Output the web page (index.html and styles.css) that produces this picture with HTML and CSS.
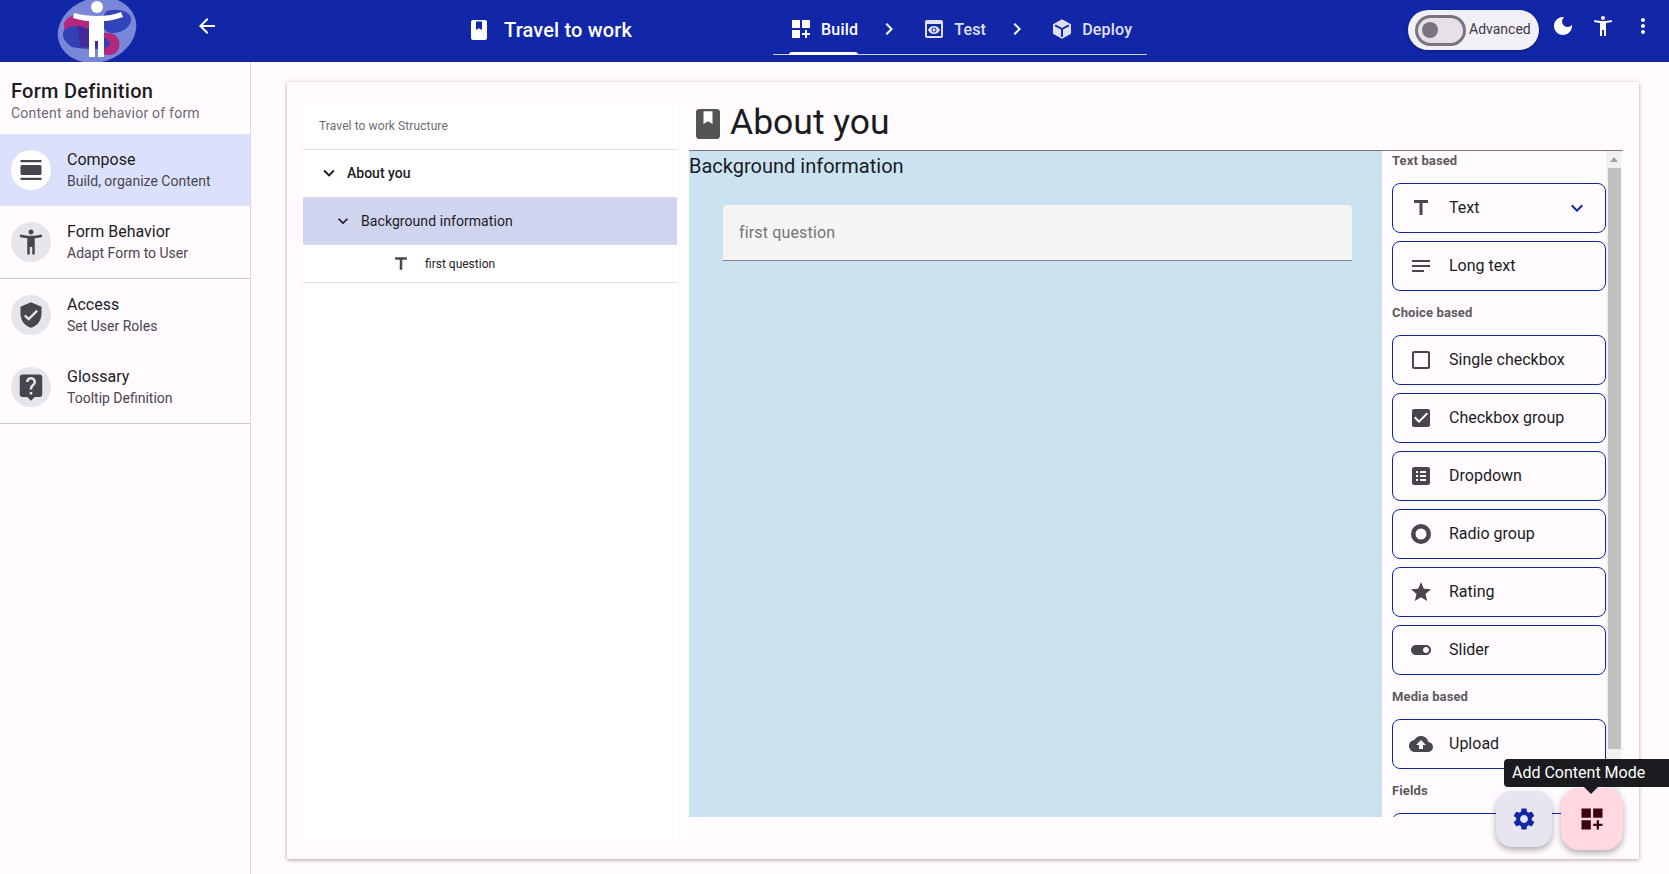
FILE: index.html
```html
<!DOCTYPE html>
<html lang="en">
<head>
<meta charset="utf-8">
<title>Travel to work</title>
<link rel="stylesheet" href="styles.css">
</head>
<body>
<svg class="sprite" aria-hidden="true">
  <symbol id="i-back" viewBox="0 0 24 24"><path d="M20 11H7.83l5.59-5.59L12 4l-8 8 8 8 1.41-1.41L7.83 13H20v-2z"/></symbol>
  <symbol id="i-book" viewBox="0 0 24 24"><path fill-rule="evenodd" d="M18 2H6c-1.1 0-2 .9-2 2v16c0 1.1.9 2 2 2h12c1.1 0 2-.9 2-2V4c0-1.1-.9-2-2-2zM9 3.5h6V12l-3-1.8L9 12V3.5z"/></symbol>
  <symbol id="i-build" viewBox="0 0 24 24"><path d="M3 3h8v8H3zm10 0h8v8h-8zM3 13h8v8H3zm15 0h-2v3h-3v2h3v3h2v-3h3v-2h-3z"/></symbol>
  <symbol id="i-right" viewBox="0 0 24 24"><path d="M10 6L8.59 7.41 13.17 12l-4.58 4.59L10 18l6-6z"/></symbol>
  <symbol id="i-preview" viewBox="0 0 24 24"><path d="M19 3H5c-1.11 0-2 .9-2 2v14c0 1.1.89 2 2 2h14c1.1 0 2-.9 2-2V5c0-1.1-.89-2-2-2zm0 16H5V7h14v12zm-5.5-6c0 .83-.67 1.5-1.5 1.5s-1.5-.67-1.5-1.5.67-1.5 1.5-1.5 1.5.67 1.5 1.5zM12 9c-2.73 0-5.06 1.66-6 4 .94 2.34 3.27 4 6 4s5.06-1.66 6-4c-.94-2.34-3.27-4-6-4zm0 6.5c-1.38 0-2.5-1.12-2.5-2.5s1.12-2.5 2.5-2.5 2.5 1.12 2.5 2.5-1.12 2.5-2.5 2.5z"/></symbol>
  <symbol id="i-cube" viewBox="0 0 24 24"><path fill-rule="evenodd" d="M12 2.2l9 5v9.6l-9 5-9-5V7.2l9-5zM12 11L5.6 7.6l-.9 1.6 6.3 3.4V19.800h2v-7.200l6.300-3.400-.9-1.600L12 11z"/></symbol>
  <symbol id="i-moon" viewBox="0 0 24 24"><path d="M12 3c-4.970 0-9 4.030-9 9s4.030 9 9 9 9-4.030 9-9c0-.46-.04-.92-.1-1.360-.98 1.370-2.580 2.260-4.400 2.260-2.980 0-5.400-2.420-5.400-5.400 0-1.810.89-3.420 2.260-4.400-.44-.06-.9-.1-1.360-.1z"/></symbol>
  <symbol id="i-person" viewBox="0 0 24 24"><path d="M20.500 6c-2.610.7-5.670 1-8.500 1s-5.890-.3-8.500-1L3 8c1.860.5 4 .83 6 1v13h2v-6h2v6h2V9c2-.17 4.140-.5 6-1l-.5-2zM12 6c1.100 0 2-.9 2-2s-.9-2-2-2-2 .9-2 2 .9 2 2 2z"/></symbol>
  <symbol id="i-more" viewBox="0 0 24 24"><path d="M12 8c1.100 0 2-.9 2-2s-.9-2-2-2-2 .9-2 2 .9 2 2 2zm0 2c-1.100 0-2 .9-2 2s.9 2 2 2 2-.9 2-2-.9-2-2-2zm0 6c-1.100 0-2 .9-2 2s.9 2 2 2 2-.9 2-2-.9-2-2-2z"/></symbol>
  <symbol id="i-day" viewBox="0 0 24 24"><path d="M1.500 2h21v2.300h-21zM1.500 19.700h21V22h-21zM3 7h18a1.500 1.500 0 011.500 1.500v7A1.500 1.500 0 0121 17H3a1.500 1.500 0 01-1.500-1.500v-7A1.500 1.500 0 013 7z"/></symbol>
  <symbol id="i-shield" viewBox="0 0 24 24"><path d="M12 1L3 5v6c0 5.550 3.840 10.740 9 12 5.160-1.260 9-6.450 9-12V5l-9-4zm-2 16l-4-4 1.410-1.410L10 14.170l6.590-6.590L18 9l-8 8z"/></symbol>
  <symbol id="i-help" viewBox="0 0 24 24"><path d="M19 2H5c-1.110 0-2 .9-2 2v14c0 1.100.89 2 2 2h4l3 3 3-3h4c1.100 0 2-.9 2-2V4c0-1.100-.9-2-2-2zm-6 16h-2v-2h2v2zm2.070-7.750l-.9.92C13.450 11.900 13 12.500 13 14h-2v-.5c0-1.100.45-2.100 1.170-2.830l1.240-1.260c.37-.36.59-.86.59-1.410 0-1.100-.9-2-2-2s-2 .9-2 2H8c0-2.210 1.790-4 4-4s4 1.790 4 4c0 .88-.36 1.680-.93 2.250z"/></symbol>
  <symbol id="i-down" viewBox="0 0 24 24"><path d="M16.590 8.590L12 13.170 7.410 8.590 6 10l6 6 6-6z"/></symbol>
  <symbol id="i-title" viewBox="0 0 24 24"><path d="M5 4v3h5.500v12h3V7H19V4z"/></symbol>
  <symbol id="i-notes" viewBox="0 0 24 24"><path d="M3 18h12v-2H3v2zM3 6v2h18V6H3zm0 7h18v-2H3v2z"/></symbol>
  <symbol id="i-blank" viewBox="0 0 24 24"><path d="M19 5v14H5V5h14m0-2H5c-1.100 0-2 .9-2 2v14c0 1.100.9 2 2 2h14c1.100 0 2-.9 2-2V5c0-1.100-.9-2-2-2z"/></symbol>
  <symbol id="i-check" viewBox="0 0 24 24"><path d="M19 3H5c-1.110 0-2 .9-2 2v14c0 1.100.89 2 2 2h14c1.110 0 2-.9 2-2V5c0-1.100-.89-2-2-2zm-9 14l-5-5 1.410-1.410L10 14.170l7.590-7.590L19 8l-9 9z"/></symbol>
  <symbol id="i-list" viewBox="0 0 24 24"><path d="M19 3H5c-1.100 0-2 .9-2 2v14c0 1.100.9 2 2 2h14c1.100 0 2-.9 2-2V5c0-1.100-.9-2-2-2zM9 17H7v-2h2v2zm0-4H7v-2h2v2zm0-4H7V7h2v2zm8 8h-6v-2h6v2zm0-4h-6v-2h6v2zm0-4h-6V7h6v2z"/></symbol>
  <symbol id="i-radio" viewBox="0 0 24 24"><path fill-rule="evenodd" d="M12 2a10 10 0 100 20 10 10 0 000-20zm0 4.500a5.500 5.500 0 110 11 5.500 5.500 0 010-11z"/></symbol>
  <symbol id="i-star" viewBox="0 0 24 24"><path d="M12 17.270L18.180 21l-1.640-7.030L22 9.240l-7.190-.61L12 2 9.190 8.630 2 9.240l5.460 4.730L5.820 21z"/></symbol>
  <symbol id="i-toggle" viewBox="0 0 24 24"><path d="M17 7H7c-2.760 0-5 2.240-5 5s2.240 5 5 5h10c2.760 0 5-2.240 5-5s-2.240-5-5-5zm0 8c-1.660 0-3-1.340-3-3s1.340-3 3-3 3 1.340 3 3-1.340 3-3 3z"/></symbol>
  <symbol id="i-upload" viewBox="0 0 24 24"><path d="M19.350 10.040C18.670 6.590 15.640 4 12 4 9.110 4 6.600 5.640 5.350 8.040 2.340 8.360 0 10.910 0 14c0 3.310 2.690 6 6 6h13c2.760 0 5-2.240 5-5 0-2.640-2.050-4.780-4.650-4.960zM14 13v4h-4v-4H7l5-5 5 5h-3z"/></symbol>
  <symbol id="i-gear" viewBox="0 0 24 24"><path d="M19.140 12.940c.04-.3.06-.61.06-.94 0-.32-.02-.64-.07-.94l2.030-1.580c.18-.14.23-.41.12-.61l-1.920-3.320c-.12-.22-.37-.29-.59-.22l-2.390.96c-.5-.38-1.030-.7-1.620-.94l-.36-2.540c-.04-.24-.24-.41-.48-.41h-3.840c-.24 0-.43.17-.47.41l-.36 2.540c-.59.24-1.130.57-1.620.94l-2.390-.96c-.22-.08-.47 0-.59.22L2.740 8.870c-.12.21-.08.47.12.61l2.030 1.580c-.05.3-.09.63-.09.94s.02.64.07.94l-2.030 1.580c-.18.14-.23.41-.12.61l1.920 3.320c.12.22.37.29.59.22l2.390-.96c.5.38 1.030.7 1.620.94l.36 2.540c.05.24.24.41.48.41h3.840c.24 0 .44-.17.47-.41l.36-2.540c.59-.24 1.130-.56 1.620-.94l2.390.96c.22.08.47 0 .59-.22l1.920-3.320c.12-.22.07-.47-.12-.61l-2.010-1.580zM12 15.600c-1.980 0-3.600-1.620-3.600-3.600s1.620-3.600 3.600-3.600 3.600 1.620 3.600 3.600-1.620 3.600-3.600 3.600z"/></symbol>
</svg>

<header class="topbar">
  <svg class="logo" viewBox="0 0 80 62" aria-hidden="true">
    <ellipse cx="40" cy="30" rx="40" ry="32" transform="rotate(-18 40 30)" fill="#7a86d8"/>
    <path d="M50 11c9-3 22-1 24 7 1 8-8 15-19 15-6 0-9-4-9-11 0-6 1-9 4-11z" fill="#3145bb"/>
    <path d="M7 24c1-6 9-10 17-9l14 5-2 15C24 35 12 36 8 31c-1-2-1-4-1-7z" fill="#b3277d"/>
    <path d="M41 34c9-3 19-1 21 7 2 8-3 14-10 14-7 0-13-5-13-12z" fill="#b3277d"/>
    <path d="M6 33c1-6 11-8 20-6 9 2 19 8 26 14 2 3-1 8-8 8-10 0-20 0-29-2-5-3-10-9-9-14z" fill="#3340b6"/>
    <path d="M20 26c8 0 17 6 28 13l-4 8H24z" fill="#43299c"/>
    <path d="M17 13c7 2 15 3 23 3s16-1 24-4l2 5c-6 2-13 4-19 4v36h-6V41h-3v16h-6V21c-5 0-11-2-16-3z" fill="#fff"/>
    <circle cx="40" cy="7" r="6" fill="#fff"/>
  </svg>
  <svg class="icon back"><use href="#i-back"/></svg>
  <div class="doc-title">
    <svg class="icon book"><use href="#i-book"/></svg>
    <span class="doc-name">Travel to work</span>
  </div>
  <nav class="tabs">
    <div class="tab active">
      <svg class="icon"><use href="#i-build"/></svg>
      <span>Build</span>
      <i class="tab-bar"></i>
    </div>
    <svg class="icon sep"><use href="#i-right"/></svg>
    <div class="tab">
      <svg class="icon"><use href="#i-preview"/></svg>
      <span>Test</span>
    </div>
    <svg class="icon sep"><use href="#i-right"/></svg>
    <div class="tab">
      <svg class="icon"><use href="#i-cube"/></svg>
      <span>Deploy</span>
    </div>
  </nav>
  <div class="top-actions">
    <div class="advanced">
      <span class="switch"><i class="switch-thumb"></i></span>
      <span class="advanced-label">Advanced</span>
    </div>
    <svg class="icon top-icon"><use href="#i-moon"/></svg>
    <svg class="icon top-icon"><use href="#i-person"/></svg>
    <svg class="icon top-icon"><use href="#i-more"/></svg>
  </div>
</header>

<div class="page">
  <aside class="sidebar">
    <div class="side-head">
      <div class="side-title">Form Definition</div>
      <div class="side-sub">Content and behavior of form</div>
    </div>
    <div class="side-item selected">
      <span class="side-icon"><svg class="icon"><use href="#i-day"/></svg></span>
      <div><div class="item-title">Compose</div><div class="item-sub">Build, organize Content</div></div>
    </div>
    <div class="side-item ruled">
      <span class="side-icon"><svg class="icon big"><use href="#i-person"/></svg></span>
      <div><div class="item-title">Form Behavior</div><div class="item-sub">Adapt Form to User</div></div>
    </div>
    <div class="side-item">
      <span class="side-icon"><svg class="icon mid"><use href="#i-shield"/></svg></span>
      <div><div class="item-title">Access</div><div class="item-sub">Set User Roles</div></div>
    </div>
    <div class="side-item ruled">
      <span class="side-icon"><svg class="icon big"><use href="#i-help"/></svg></span>
      <div><div class="item-title">Glossary</div><div class="item-sub">Tooltip Definition</div></div>
    </div>
  </aside>

  <main class="content">
    <section class="card">
      <div class="tree">
        <div class="tree-head">Travel to work Structure</div>
        <div class="tree-row lvl-1">
          <svg class="icon tree-chev"><use href="#i-down"/></svg>
          <span>About you</span>
        </div>
        <div class="tree-row lvl-2">
          <svg class="icon tree-chev small"><use href="#i-down"/></svg>
          <span>Background information</span>
        </div>
        <div class="tree-row lvl-3">
          <svg class="icon tree-t"><use href="#i-title"/></svg>
          <span>first question</span>
        </div>
      </div>

      <div class="editor">
        <div class="page-title">
          <svg class="icon title-book"><use href="#i-book"/></svg>
          <h1>About you</h1>
        </div>
        <div class="workspace">
          <div class="canvas">
            <h2>Background information</h2>
            <div class="field">first question</div>
          </div>
          <div class="palette">
            <div class="pal-label">Text based</div>
            <div class="pal-group">
              <div class="pal-btn"><svg class="icon"><use href="#i-title"/></svg><span>Text</span><svg class="icon pal-chev"><use href="#i-down"/></svg></div>
              <div class="pal-btn"><svg class="icon"><use href="#i-notes"/></svg><span>Long text</span></div>
            </div>
            <div class="pal-label">Choice based</div>
            <div class="pal-group">
              <div class="pal-btn"><svg class="icon"><use href="#i-blank"/></svg><span>Single checkbox</span></div>
              <div class="pal-btn"><svg class="icon"><use href="#i-check"/></svg><span>Checkbox group</span></div>
              <div class="pal-btn"><svg class="icon"><use href="#i-list"/></svg><span>Dropdown</span></div>
              <div class="pal-btn"><svg class="icon"><use href="#i-radio"/></svg><span>Radio group</span></div>
              <div class="pal-btn"><svg class="icon"><use href="#i-star"/></svg><span>Rating</span></div>
              <div class="pal-btn"><svg class="icon"><use href="#i-toggle"/></svg><span>Slider</span></div>
            </div>
            <div class="pal-label">Media based</div>
            <div class="pal-group">
              <div class="pal-btn"><svg class="icon"><use href="#i-upload"/></svg><span>Upload</span></div>
            </div>
            <div class="pal-label">Fields</div>
            <div class="pal-group">
              <div class="pal-btn"></div>
            </div>
          </div>
          <div class="scrollbar">
            <span class="scroll-arrow"></span>
            <span class="scroll-thumb"></span>
          </div>
        </div>
      </div>

      <div class="fabs">
        <button class="fab fab-gear" type="button"><svg class="icon"><use href="#i-gear"/></svg></button>
        <button class="fab fab-add" type="button"><svg class="icon"><use href="#i-build"/></svg></button>
        <div class="tooltip">Add Content Mode</div>
      </div>
    </section>
  </main>
</div>
</body>
</html>
```

FILE: styles.css
```css
* { box-sizing: border-box; }

html, body {
  margin: 0;
  height: 874px;
  overflow: hidden;
  background: #fffbff;
  color: #1c1b1f;
  font-family: Roboto, "Liberation Sans", sans-serif;
}

.sprite { display: none; }

.icon {
  display: block;
  flex: none;
  width: 24px;
  height: 24px;
  fill: currentColor;
}

/* Top bar */
.topbar {
  display: flex;
  align-items: flex-start;
  height: 62px;
  background: #1226a8;
  color: #fff;
  overflow: hidden;
}

.logo {
  flex: none;
  width: 80px;
  height: 62px;
  margin-left: 57px;
  overflow: visible;
}

.back { margin: 14px 0 0 58px; }

.doc-title {
  display: flex;
  align-items: center;
  gap: 13px;
  flex: none;
  width: 306px;
  height: 60px;
  margin-left: 248px;
}

.doc-name {
  font-size: 20px;
  font-weight: 500;
  letter-spacing: .15px;
}

.tabs {
  display: flex;
  align-items: center;
  flex: none;
  gap: 20px;
  width: 374px;
  height: 55px;
  padding: 4px 0 0 16px;
  border-bottom: 1px solid #cfcfd6;
  color: #e1e0f3;
  font-size: 16px;
  font-weight: 500;
  letter-spacing: .2px;
}

.tab {
  position: relative;
  display: flex;
  align-items: center;
  gap: 8px;
  height: 50px;
}

.tab.active { color: #fff; }

.tab-bar {
  position: absolute;
  left: 0;
  right: 0;
  bottom: -1px;
  height: 3px;
  border-radius: 3px 3px 0 0;
  background: #fff;
}

.sep { color: #fff; margin: 0 1px 0 -1px; }

.top-actions {
  display: flex;
  align-items: flex-start;
  gap: 16px;
  margin-left: auto;
  padding: 10px 14px 0 0;
}

.advanced {
  display: flex;
  align-items: center;
  gap: 3px;
  width: 131px;
  height: 40px;
  margin-right: -4px;
  padding-left: 7px;
  border-radius: 20px;
  background: #f3eff6;
  color: #3d3a44;
  font-size: 14px;
  box-shadow: 0 1px 3px rgba(0, 0, 0, .35);
}

.advanced-label { padding-bottom: 2px; }

.switch {
  display: flex;
  align-items: center;
  flex: none;
  width: 51px;
  height: 31px;
  padding-left: 4px;
  border: 3px solid #79747e;
  border-radius: 16px;
  background: #e6e0e9;
}

.switch-thumb {
  width: 16px;
  height: 16px;
  border-radius: 50%;
  background: #79747e;
}

.top-icon { margin-top: 4px; }

/* Shell */
.page {
  display: flex;
  height: 812px;
}

.sidebar {
  flex: none;
  width: 251px;
  border-right: 1px solid #d9d7dc;
}

.side-head {
  height: 72px;
  padding: 18px 11px 0;
}

.side-title {
  font-size: 20px;
  font-weight: 500;
  line-height: 23px;
  letter-spacing: .28px;
}

.side-sub {
  color: #6d6a72;
  font-size: 14px;
  line-height: 20px;
  letter-spacing: .23px;
}

.side-item {
  display: flex;
  align-items: center;
  gap: 16px;
  height: 72px;
  padding: 0 11px;
}

.side-item.selected { background: #dce1fb; }

.side-item.ruled {
  height: 73px;
  padding-bottom: 1px;
  border-bottom: 1px solid #c4c9c9;
}

.side-icon {
  display: flex;
  align-items: center;
  justify-content: center;
  flex: none;
  width: 40px;
  height: 40px;
  border-radius: 50%;
  background: #e7e4ea;
  color: #49454f;
}

.selected .side-icon { background: #fff; }
.side-icon .big { width: 30px; height: 30px; }
.side-icon .mid { width: 28px; height: 28px; }

.item-title {
  color: #1c1b1f;
  font-size: 16px;
  line-height: 22px;
}

.item-sub {
  color: #49454f;
  font-size: 14px;
  line-height: 20px;
}

.content {
  flex: 1;
  padding: 20px 30px 0 36px;
}

.card {
  position: relative;
  display: flex;
  gap: 12px;
  width: 1352px;
  height: 777px;
  padding: 20px 16px 0;
  background: #fffbff;
  box-shadow: 0 1px 4px rgba(0, 0, 0, .35);
}

/* Structure tree */
.tree {
  flex: none;
  width: 374px;
  height: 740px;
  background: #fff;
}

.tree-head {
  display: flex;
  align-items: center;
  height: 48px;
  padding-left: 16px;
  border-bottom: 1px solid #dedcdf;
  color: #6f6b73;
  font-size: 12px;
  letter-spacing: .1px;
}

.tree-row {
  display: flex;
  align-items: center;
  font-size: 14px;
}

.lvl-1 {
  gap: 7px;
  height: 47px;
  padding: 0 0 1px 15px;
  font-weight: 500;
}

.lvl-2 {
  gap: 7px;
  height: 48px;
  padding-left: 29px;
  border-top: 1px solid #dedcdf;
  border-bottom: 1px solid #dedcdf;
  background: #d0d4ee;
  letter-spacing: .07px;
}

.lvl-3 {
  gap: 14px;
  height: 38px;
  padding-left: 88px;
  border-bottom: 1px solid #dedcdf;
  color: #26242a;
  font-size: 12px;
}

.tree-chev { width: 22px; height: 22px; }
.tree-chev.small { width: 20px; height: 20px; margin-left: 1px; margin-right: 1px; }

.tree-t {
  width: 20px;
  height: 20px;
  margin-top: 1px;
  color: #49454f;
}

/* Editor */
.editor {
  display: flex;
  flex-direction: column;
  flex: none;
  width: 934px;
}

.page-title {
  display: flex;
  align-items: center;
  gap: 4px;
  height: 49px;
  padding: 0 0 9px 1px;
  border-bottom: 1px solid #79747e;
}

.title-book {
  width: 36px;
  height: 36px;
  margin-top: 4px;
  color: #545454;
}

.page-title h1 {
  margin: 0;
  font-size: 35.5px;
  font-weight: 400;
  line-height: 40px;
}

.workspace {
  display: flex;
  height: 666px;
}

.canvas {
  flex: none;
  width: 693px;
  padding-right: 30px;
  background: #cbe3f1;
}

.canvas h2 {
  margin: 0 0 24px;
  font-size: 20px;
  font-weight: 400;
  line-height: 30px;
}

.field {
  display: flex;
  align-items: center;
  height: 56px;
  margin-left: 34px;
  padding-left: 16px;
  border-radius: 4px 4px 0 0;
  border-bottom: 1px solid #8a868f;
  background: #f5f5f5;
  color: #757575;
  font-size: 16px;
  letter-spacing: .15px;
}

/* Palette */
.palette {
  flex: none;
  width: 224px;
  height: 666px;
  padding: 2px 0 0 10px;
  overflow: hidden;
}

.scrollbar {
  display: flex;
  flex-direction: column;
  flex: none;
  width: 15px;
  background: #f1f1f1;
}

.scroll-arrow {
  display: flex;
  justify-content: center;
  align-items: center;
  height: 17px;
}

.scroll-arrow::before {
  content: "";
  border: 4px solid transparent;
  border-top: 0;
  border-bottom: 5px solid #a3a3a3;
}

.scroll-thumb {
  height: 581px;
  margin-left: 2px;
  background: #c1c1c1;
}

.pal-label {
  margin-bottom: 14px;
  color: #5c5a60;
  font-size: 13px;
  font-weight: 700;
  line-height: 16px;
  letter-spacing: .13px;
}

.pal-group {
  display: flex;
  flex-direction: column;
  gap: 8px;
  margin-bottom: 14px;
}

.pal-group:last-child { margin-bottom: 0; }

.pal-btn {
  display: flex;
  align-items: center;
  gap: 16px;
  flex: none;
  width: 214px;
  height: 50px;
  padding: 0 16px;
  border: 1.5px solid #1226a8;
  border-radius: 8px;
  color: #1c1b1f;
  font-size: 16px;
}

.pal-btn span { padding-bottom: 2px; }
.pal-btn .icon { color: #49454f; }
.pal-btn .pal-chev { margin-left: auto; color: #1226a8; }

/* Floating buttons */
.fabs {
  position: absolute;
  top: 706px;
  right: 16px;
  display: flex;
  align-items: center;
  gap: 9px;
}

.fab {
  display: flex;
  align-items: center;
  justify-content: center;
  padding: 0;
  border: 0;
  border-radius: 16px;
  box-shadow: 0 3px 6px rgba(0, 0, 0, .32);
}

.fab-gear {
  width: 56px;
  height: 56px;
  background: #e7e6f0;
  color: #1226a8;
}

.fab-gear .icon { width: 26px; height: 26px; }

.fab-add {
  width: 62px;
  height: 62px;
  border-radius: 18px;
  background: #ffd9df;
  color: #3c0010;
}

.fab-add .icon { width: 28px; height: 28px; }

.tooltip {
  position: absolute;
  top: -29px;
  left: 8px;
  width: 170px;
  height: 28px;
  padding-left: 8px;
  border-radius: 4px;
  background: #1c1b1f;
  color: #fff;
  font-size: 16px;
  line-height: 27px;
}

.tooltip::after {
  content: "";
  position: absolute;
  top: 100%;
  left: 80px;
  border: 7px solid transparent;
  border-top-color: #1c1b1f;
  border-bottom: 0;
}
```
